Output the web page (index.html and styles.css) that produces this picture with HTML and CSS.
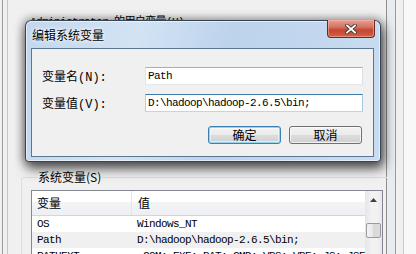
FILE: index.html
```html
<!DOCTYPE html>
<html>
  <head>
    <meta charset="UTF-8" />
    <link rel="stylesheet" href="styles.css">
  </head>
  <body>
    <div id="screen">
      <div id="envwin">
        <div class="client">
          <div class="user_group">Administrator 的用户变量(U)</div>
          <fieldset class="sys_group">
            <legend>系统变量(S)</legend>
            <div class="list">
              <div class="list_body">
                <div class="list_head">
                  <div class="col_name">变量</div>
                  <div class="col_value">值</div>
                </div>
                <div class="list_row">
                  <div class="col_name">OS</div>
                  <div class="col_value">Windows_NT</div>
                </div>
                <div class="list_row selected">
                  <div class="col_name">Path</div>
                  <div class="col_value">D:\hadoop\hadoop-2.6.5\bin;</div>
                </div>
                <div class="list_row">
                  <div class="col_name">PATHEXT</div>
                  <div class="col_value">.COM;.EXE;.BAT;.CMD;.VBS;.VBE;.JS;.JSE</div>
                </div>
              </div>
              <div class="scrollbar">
                <div class="scroll_btn">
                  <svg width="7" height="4" viewBox="0 0 7 4"><path d="M0 4h7L3.5 0z" fill="#404040"/></svg>
                </div>
                <div class="scroll_track">
                  <div class="scroll_thumb"></div>
                </div>
              </div>
            </div>
          </fieldset>
        </div>
      </div>
      <div class="rframe"></div>
      <div class="farwin"></div>

      <div id="dialog">
        <div class="title_bar">
          <span class="title">编辑系统变量</span>
          <div class="close_btn">
            <svg width="12" height="10" viewBox="0 0 12 10">
              <path d="M2 1.5L10 8.5M10 1.5L2 8.5" stroke="#3b3b3b" stroke-width="3.6" stroke-linecap="square"/>
              <path d="M2 1.5L10 8.5M10 1.5L2 8.5" stroke="#ffffff" stroke-width="1.8" stroke-linecap="square"/>
            </svg>
          </div>
        </div>
        <div class="dlg_client">
          <div class="field_grid">
            <label>变量名(N):</label>
            <div class="edit">Path</div>
            <label>变量值(V):</label>
            <div class="edit focus">D:\hadoop\hadoop-2.6.5\bin;</div>
          </div>
          <div class="btn_row">
            <div class="btn default">确定</div>
            <div class="btn">取消</div>
          </div>
        </div>
      </div>
    </div>
  </body>
</html>
```

FILE: styles.css
```css
body {
    margin: 0;
}
#screen {
    position: relative;
    display: flex;
    width: 416px;
    height: 254px;
    overflow: hidden;
    background: #f0f0f0;
    font-family: "Liberation Mono", "Noto Sans CJK SC", monospace;
    font-size: 12px;
    color: #000;
}

/* window behind the dialog */
#envwin {
    margin-left: 2px;
    width: 385px;
    flex: none;
    box-sizing: border-box;
    border-left: 1px solid #9a9a9a;
    border-right: 1px solid #8f8f8f;
    padding-left: 4px;
    display: flex;
}
.client {
    flex: 1;
    border-left: 1px solid #c4c4c4;
}
.user_group {
    margin: 15px 0 0 22px;
    height: 14px;
    line-height: 14px;
    font-size: 11px;
    letter-spacing: -0.6px;
    white-space: nowrap;
}
.sys_group {
    margin: 141px 9px 0 13px;
    padding: 6px 10px 0 9px;
    border: 1px solid #d5dfe5;
    border-radius: 3px;
    min-width: 0;
}
.sys_group legend {
    padding: 0 1px;
    margin-left: 6px;
    line-height: 14px;
    font-family: "Noto Sans CJK SC", sans-serif;
    font-size: 12px;
}
.list {
    display: flex;
    height: 80px;
    border: 1px solid #828790;
    background: #fff;
}
.list_body {
    flex: 1;
    min-width: 0;
}
.list_head {
    display: flex;
    height: 24px;
    border-bottom: 1px solid #d5d5d5;
    background: linear-gradient(#ffffff 0, #ffffff 11px, #f3f4f6 11px, #eeeff2 24px);
    font-family: "Noto Sans CJK SC", sans-serif;
    font-size: 12px;
    line-height: 24px;
}
.list_head .col_name {
    border-right: 1px solid #e3e5e7;
}
.col_name {
    width: 94px;
    padding-left: 5px;
    flex: none;
}
.col_value {
    padding-left: 6px;
    white-space: nowrap;
}
.list_row {
    display: flex;
    height: 16px;
    line-height: 16px;
    font-size: 11px;
    letter-spacing: -0.6px;
}
.list_row .col_name {
    width: 93px;
    padding-left: 5px;
    padding-right: 1px;
}
.list_row.selected {
    background: #f0f0f0;
}
.scrollbar {
    width: 17px;
    flex: none;
    display: flex;
    flex-direction: column;
    background: linear-gradient(90deg, #e6e6e6, #f2f2f2 40%, #f2f2f2 70%, #e8e8e8);
}
.scroll_btn {
    height: 17px;
    display: flex;
    align-items: center;
    justify-content: center;
}
.scroll_track {
    flex: 1;
    padding-top: 15px;
}
.scroll_thumb {
    height: 13px;
    margin: 0 1px;
    border: 1px solid #9a9a9a;
    border-radius: 2px;
    background: linear-gradient(90deg, #f4f4f4, #e6e6e6 50%, #d9d9d9 50%, #dcdcdc);
}
.rframe {
    width: 8px;
    flex: none;
    background: #e9ecef;
    border-right: 1px solid #9b9b9b;
}
.farwin {
    flex: 1;
    margin-left: 7px;
    border-left: 1px solid #c8c8c8;
    background: #f8f8f8;
}

/* the dialog */
#dialog {
    position: absolute;
    left: 25px;
    top: 20px;
    width: 356px;
    height: 142px;
    box-sizing: border-box;
    display: flex;
    flex-direction: column;
    padding: 0 6px 4px 5px;
    border: 1px solid rgba(30, 40, 55, 0.85);
    border-radius: 6px 6px 4px 4px;
    background: linear-gradient(100deg, #c2d7ee 0%, #d3e3f4 30%, #bcd3ec 55%, #c9dcf1 100%);
    box-shadow: inset 0 0 0 1px rgba(255, 255, 255, 0.55),
                0 0 8px 2px rgba(0, 0, 0, 0.3),
                2px 6px 12px 1px rgba(0, 0, 0, 0.6);
}
.title_bar {
    height: 27px;
    display: flex;
    align-items: center;
}
.title {
    padding-left: 1px;
    font-family: "Noto Sans CJK SC", sans-serif;
    font-size: 12px;
    text-shadow: 0 0 5px #fff, 0 0 3px #fff;
}
.close_btn {
    align-self: flex-start;
    margin: -1px -1px 0 auto;
    width: 46px;
    height: 17px;
    border: 1px solid #6e2a22;
    border-top: none;
    border-radius: 0 0 4px 4px;
    background: linear-gradient(#e8a193 0, #d47565 40%, #c4442f 60%, #d2624b 100%);
    display: flex;
    align-items: center;
    justify-content: center;
    box-shadow: inset 0 0 0 1px rgba(255, 190, 175, 0.5);
}
.dlg_client {
    flex: 1;
    border: 1px solid #5c7590;
    background: #f0f0f0;
}
.field_grid {
    display: grid;
    grid-template-columns: 103px 218px;
    grid-auto-rows: 18px;
    row-gap: 9px;
    padding: 18px 10px 0 10px;
    align-items: center;
}
.field_grid label {
    white-space: nowrap;
}
.edit {
    height: 18px;
    box-sizing: border-box;
    border: 1px solid #abadb3;
    border-color: #abadb3 #dbdfe6 #e3e9ef #e2e3ea;
    background: #fff;
    padding-left: 2px;
    line-height: 16px;
    font-size: 11px;
    letter-spacing: -0.6px;
    white-space: nowrap;
}
.edit.focus {
    border-color: #3d7bad #a4c9e3 #b7d9ed #b5cfe7;
}
.btn_row {
    display: flex;
    justify-content: flex-end;
    gap: 8px;
    margin: 14px 11px 0 0;
}
.btn {
    width: 73px;
    height: 18px;
    box-sizing: border-box;
    border: 1px solid #707070;
    border-radius: 3px;
    background: linear-gradient(#f2f2f2 0, #ebebeb 50%, #dddddd 50%, #cfcfcf 100%);
    box-shadow: inset 0 0 0 1px rgba(255, 255, 255, 0.7);
    text-align: center;
    line-height: 16px;
    font-family: "Noto Sans CJK SC", sans-serif;
}
.btn.default {
    border-color: #3c7fb1;
    box-shadow: inset 0 0 0 1px #98d1ef, inset 0 0 0 2px rgba(255, 255, 255, 0.5);
}
```
